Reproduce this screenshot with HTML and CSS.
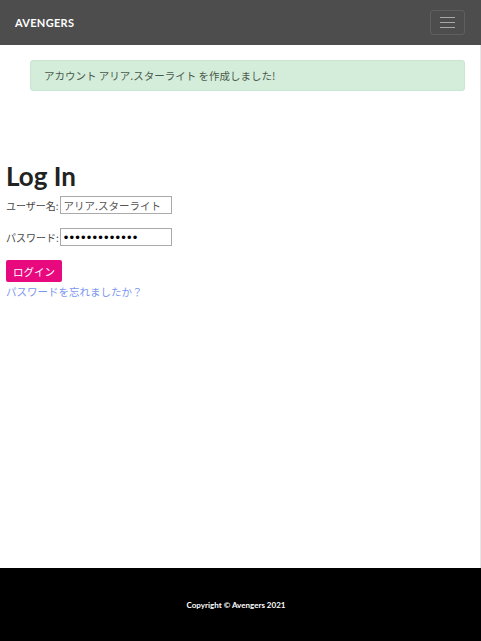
FILE: index.html
```html
<!DOCTYPE html>
<html lang="ja">
<head>
<meta charset="utf-8">
<title>Log In</title>
<link rel="stylesheet" href="styles.css">
</head>
<body>
<nav class="navbar">
  <a class="brand" href="#">AVENGERS</a>
  <button class="toggler" type="button" aria-label="menu">
    <span class="bar"></span><span class="bar"></span><span class="bar"></span>
  </button>
</nav>
<main class="main">
  <div class="alert">アカウント アリア.スターライト を作成しました!</div>
  <section class="login">
    <h1 class="title">Log In</h1>
    <form class="form">
      <p class="row"><label>ユーザー名:</label><input class="field" type="text" value="アリア.スターライト"></p>
      <p class="row"><label>パスワード:</label><input class="field pass" type="password" value="aaaaaaaaaaaaa"></p>
      <button class="btn" type="button">ログイン</button>
    </form>
    <a class="forgot" href="#">パスワードを忘れましたか？</a>
  </section>
</main>
<footer class="footer">Copyright © Avengers 2021</footer>
</body>
</html>
```
FILE: styles.css
```css
html, body { margin: 0; padding: 0; }
body {
  height: 641px;
  display: flex;
  flex-direction: column;
  font-family: "Noto Sans CJK JP", "Noto Sans", sans-serif;
  font-size: 10px;
  color: #333;
  background: #fff;
}
.navbar {
  height: 45px;
  flex: 0 0 45px;
  background: #4d4d4d;
  display: flex;
  align-items: center;
  justify-content: space-between;
  padding: 0 16px 0 15px;
  box-sizing: border-box;
}
.brand {
  font-family: Lato, sans-serif;
  font-weight: 700;
  font-size: 11px;
  color: #fff;
  text-decoration: none;
  letter-spacing: 0.3px;
}
.toggler {
  width: 35px;
  height: 25px;
  border: 1px solid rgba(255,255,255,0.1);
  border-radius: 3px;
  background: transparent;
  display: flex;
  flex-direction: column;
  align-items: center;
  justify-content: center;
  gap: 3.5px;
  padding: 0;
}
.bar {
  display: block;
  width: 15px;
  height: 1.5px;
  background: #a8a8a8;
}
.main {
  flex: 1;
  border-right: 1px solid #e6e6e6;
  padding-top: 15px;
}
.alert {
  margin: 0 15px 0 30px;
  height: 31px;
  box-sizing: border-box;
  padding: 0 13px;
  display: flex;
  align-items: center;
  background: #d4edda;
  border: 1px solid #c9e6d0;
  border-radius: 3px;
  color: #4a5a4c;
  font-size: 10.5px;
}
.login {
  padding: 0 6px;
  margin-top: 69px;
}
.title {
  font-family: Lato, sans-serif;
  font-weight: 700;
  font-size: 26px;
  line-height: 32px;
  margin: 0 0 4px 0;
  color: #222;
}
.form { margin: 0; }
.row {
  margin: 0 0 14px 0;
  display: flex;
  align-items: center;
  color: #444;
}
.field {
  width: 112px;
  height: 18px;
  box-sizing: border-box;
  border: 1px solid #aaa;
  padding: 0 3px;
  font-family: "Noto Sans CJK JP", sans-serif;
  font-size: 10.5px;
  color: #555;
  margin: 0 0 0 1px;
}
.pass {
  font-family: "Liberation Sans", sans-serif;
  font-size: 13px;
  color: #000;
  letter-spacing: 1.2px;
}
.btn {
  display: block;
  height: 22px;
  width: 56px;
  padding: 0;
  border: 0;
  border-radius: 2px;
  background: #e8097f;
  color: #fff;
  font-family: "Noto Sans CJK JP", sans-serif;
  font-size: 10.5px;
}
.forgot {
  display: block;
  margin-top: 3px;
  color: #7b96f0;
  text-decoration: none;
  font-size: 10.5px;
  line-height: 14px;
}
.footer {
  flex: 0 0 73px;
  background: #000;
  color: #fff;
  display: flex;
  align-items: center;
  justify-content: center;
  padding-right: 9px;
  font-family: Lato, sans-serif;
  font-weight: 700;
  font-size: 8px;
}
```
